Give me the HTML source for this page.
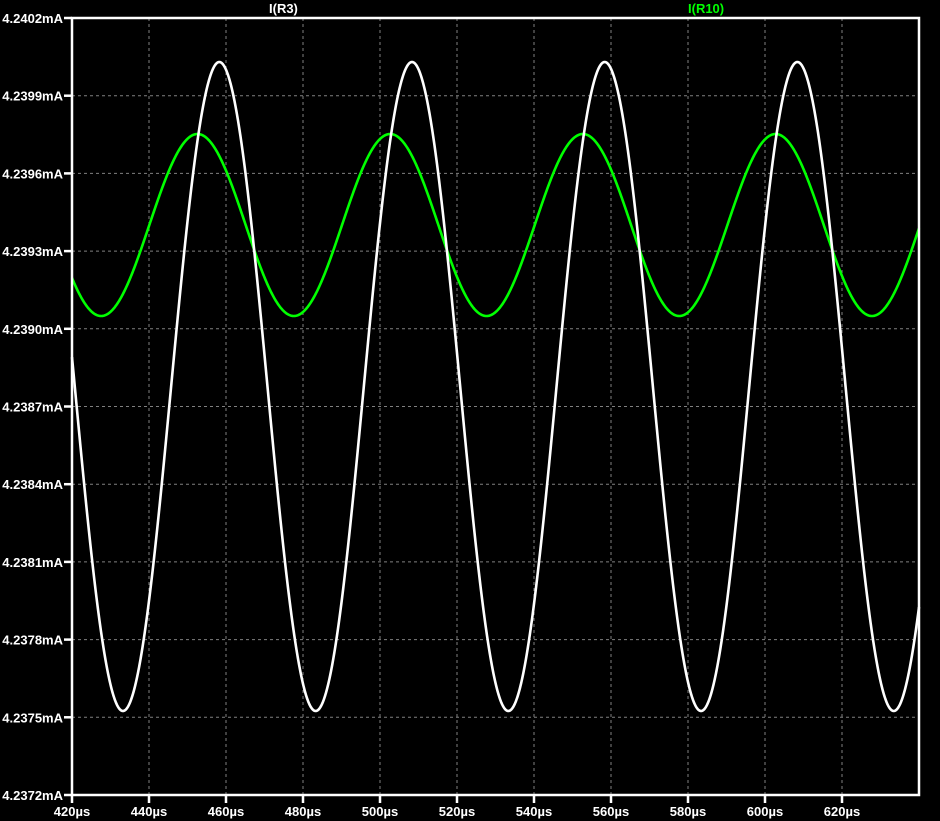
<!DOCTYPE html>
<html><head><meta charset="utf-8"><style>
html,body{margin:0;padding:0;background:#000;width:940px;height:821px;overflow:hidden}
svg{display:block}
text{font-family:"Liberation Sans",sans-serif;font-weight:bold;font-size:13px;fill:#fff}
</style></head><body>
<svg id="s" width="940" height="821" viewBox="0 0 940 821" xmlns="http://www.w3.org/2000/svg">
<g id="grid" stroke="#808080" stroke-width="1" stroke-dasharray="3,3"></g>
<g id="lbl"></g>
<path id="g" fill="none" stroke="#00ff00" stroke-width="2.6" stroke-linejoin="round"/>
<path id="w" fill="none" stroke="#ffffff" stroke-width="2.6" stroke-linejoin="round"/>
<rect x="72" y="18" width="847" height="777" fill="none" stroke="#fff" stroke-width="2.5"/>
<text x="269" y="13">I(R3)</text>
<text x="688" y="13" style="fill:#00ff00">I(R10)</text>
</svg>
<script>
var ns="http://www.w3.org/2000/svg";
var grid=document.getElementById('grid'),lbl=document.getElementById('lbl');
function el(t,a,p){var e=document.createElementNS(ns,t);for(var k in a)e.setAttribute(k,a[k]);p.appendChild(e);return e;}
var ylabels=["4.2402mA","4.2399mA","4.2396mA","4.2393mA","4.2390mA","4.2387mA","4.2384mA","4.2381mA","4.2378mA","4.2375mA","4.2372mA"];
for(var i=0;i<11;i++){var y=18+i*77.7;
 if(i>0&&i<10)el('line',{x1:72,x2:919,y1:y,y2:y},grid);
 el('line',{x1:64,x2:72,y1:y,y2:y,stroke:'#fff','stroke-width':2.5},lbl);
 var t=el('text',{x:63,y:y+5,'text-anchor':'end'},lbl);t.textContent=ylabels[i];}
for(var i=0;i<=10;i++){var x=72+i*77;
 if(i>0)el('line',{x1:x,x2:x,y1:18,y2:795},grid);
 el('line',{x1:x,x2:x,y1:795,y2:803,stroke:'#fff','stroke-width':2.5},lbl);
 var t=el('text',{x:x,y:816,'text-anchor':'middle'},lbl);t.textContent=(420+20*i)+"\u00b5s";}
function wave(c,a,x0){var d="";for(var x=72;x<=919;x+=0.5){var y=c-a*Math.cos(2*Math.PI*(x-x0)/192.7);d+=(d?"L":"M")+x+","+y.toFixed(2);}return d;}
document.getElementById('w').setAttribute('d',wave(386.5,324.5,219.3));
document.getElementById('g').setAttribute('d',wave(225,91,197.5));
</script>
</body></html>
